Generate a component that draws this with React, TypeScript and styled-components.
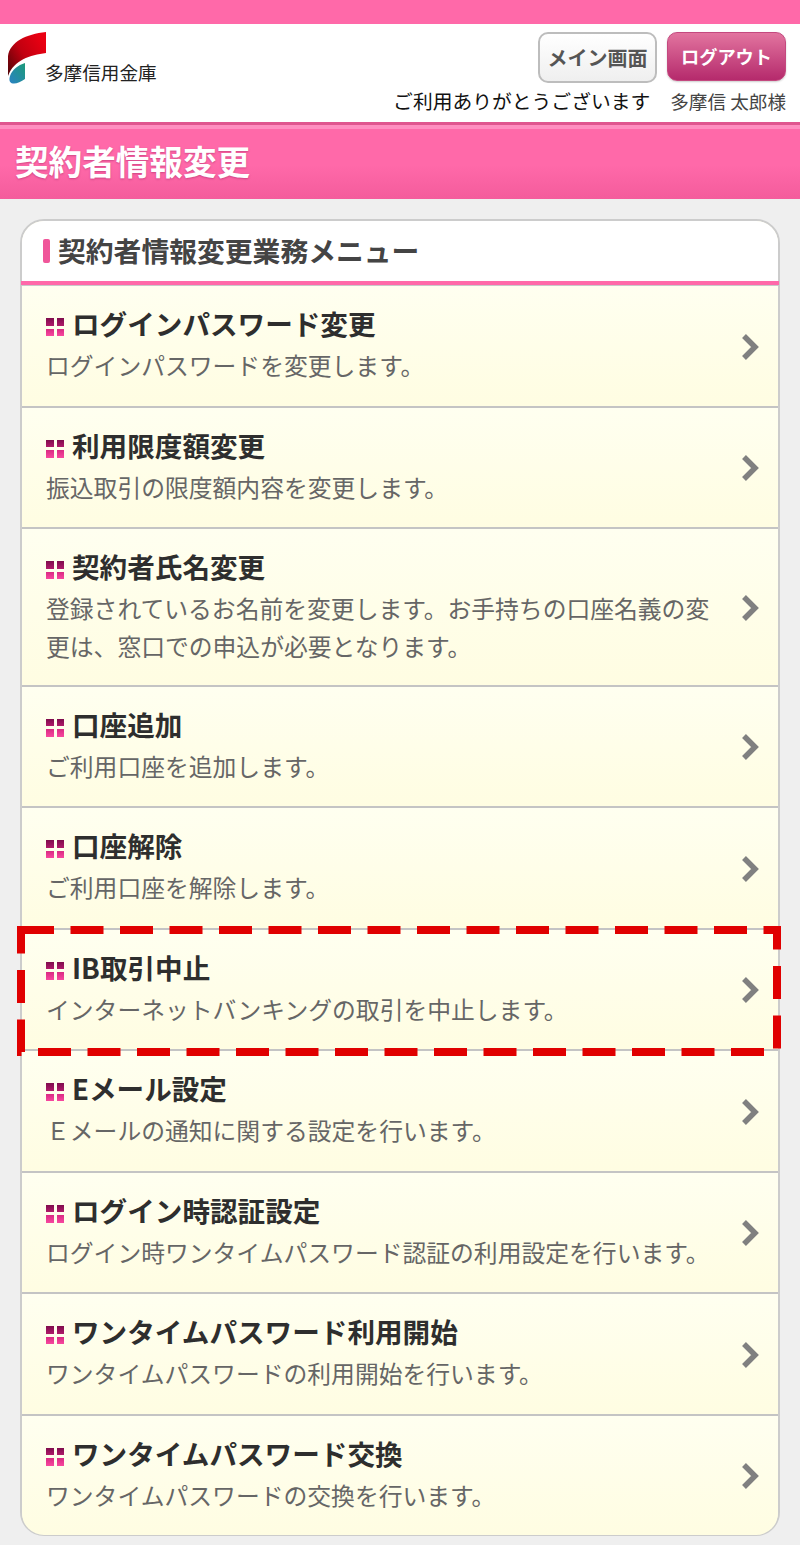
import React from "react";
import styled, { createGlobalStyle } from "styled-components";

const Global = createGlobalStyle`
  html, body { margin: 0; padding: 0; background: #efefef; }
  body { font-family: "Noto Sans CJK JP", "Liberation Sans", sans-serif; }
  * { box-sizing: border-box; }
`;

const Page = styled.div`
  width: 800px;
  height: 1545px;
  overflow: hidden;
  background: #efefef;
`;
const TopBar = styled.div`
  height: 24px;
  background: #ff69a9;
`;
const Header = styled.header`
  height: 98px;
  background: #fff;
  display: flex;
  justify-content: space-between;
  padding: 8px 14px 0 8px;
`;
const Logo = styled.div`
  display: flex;
  align-items: flex-start;
`;
const LogoName = styled.span`
  margin: 27px 0 0 -1px;
  font-size: 18.6px;
  line-height: 26px;
  color: #222;
  white-space: nowrap;
`;
const Account = styled.div`
  display: flex;
  flex-direction: column;
  align-items: flex-end;
`;
const Buttons = styled.div`
  display: flex;
  gap: 10px;
  align-items: flex-start;
`;
const MainButton = styled.button`
  width: 119px;
  height: 51px;
  padding: 0;
  border: 2px solid #bdbdbd;
  border-radius: 10px;
  background: linear-gradient(#ffffff, #efefef);
  color: #555;
  font: 700 20px/1 "Noto Sans CJK JP", sans-serif;
`;
const LogoutButton = styled.button`
  width: 119px;
  height: 49px;
  padding: 0;
  border: 1px solid #c4497f;
  border-radius: 10px;
  background: linear-gradient(#e2749f, #b52a6c);
  box-shadow: 0 1px 2px rgba(0, 0, 0, 0.2);
  color: #fff;
  font: 700 18.2px/1 "Noto Sans CJK JP", sans-serif;
`;
const Greeting = styled.div`
  display: flex;
  gap: 20px;
  margin-top: 4px;
  font-size: 19.8px;
  line-height: 28px;
  white-space: nowrap;
`;
const Thanks = styled.span`
  color: #111;
`;
const UserName = styled.span`
  color: #444;
  font-size: 18.6px;
`;
const TitleBar = styled.div`
  height: 77px;
  border-top: 3px solid #e0558f;
  display: flex;
  align-items: center;
  padding: 0 0 3px 15px;
  background: linear-gradient(#ff8ec0 0, #ff8ec0 4px, #ff69a9 4px, #ff69a9 40px, #f45c9c 100%);
`;
const Title = styled.h1`
  margin: 0;
  color: #fff;
  font-size: 33.6px;
  font-weight: 700;
  line-height: 1;
  text-shadow: 0 1px 2px rgba(150, 30, 90, 0.45);
`;
const Panel = styled.section`
  width: 760px;
  height: 1317px;
  margin: 20px 20px 0;
  border: 2px solid #ccc;
  border-radius: 24px;
  background: #fffde6;
  position: relative;
`;
const PanelHead = styled.div`
  height: 60px;
  display: flex;
  align-items: center;
  gap: 8px;
  padding-left: 21px;
  background: #fff;
  border-radius: 22px 22px 0 0;
`;
const Accent = styled.span`
  width: 7px;
  height: 24px;
  border-radius: 2px;
  background: #f0569a;
`;
const PanelTitle = styled.h2`
  margin: 0;
  font-size: 27.8px;
  line-height: 1;
  font-weight: 700;
  color: #444;
`;
const PinkRule = styled.div`
  height: 5px;
  margin: 0 -1px;
  background: linear-gradient(#ff69a9 0, #ff69a9 4px, #c9c9c9 4px);
`;
const List = styled.ul`
  margin: 0;
  padding: 0;
  list-style: none;
`;
const Row = styled.li<{ $tall?: boolean; $last?: boolean }>`
  position: relative;
  height: ${(p) => (p.$last ? "119.5px" : p.$tall ? "157.5px" : "121.5px")};
  padding: 17px 52px 0 24px;
  border-bottom: ${(p) => (p.$last ? "0" : "2px solid #c4c4c4")};
  border-radius: ${(p) => (p.$last ? "0 0 22px 22px" : "0")};
  background: linear-gradient(#fffff0, #fffde2);
`;
const RowTitle = styled.div`
  display: flex;
  align-items: center;
  gap: 8px;
  height: 43px;
  padding-bottom: 3px;
  font-size: 27.6px;
  line-height: 40px;
  font-weight: 700;
  color: #2e2e2e;
`;
const Dots = styled.span`
  display: grid;
  grid-template-columns: 7.5px 7.5px;
  grid-auto-rows: 7.5px;
  gap: 3px;
  flex: none;
  margin-top: 8px;
`;
const Dot = styled.i<{ $top?: boolean }>`
  display: block;
  background: ${(p) =>
    p.$top
      ? "linear-gradient(#7f0c4d, #b01a6a)"
      : "linear-gradient(#d92a83, #f8489f)"};
`;
const RowDesc = styled.div`
  font-size: 23.8px;
  line-height: 38px;
  color: #666;
`;
const Chevron = styled.svg`
  position: absolute;
  right: 17px;
  top: 50%;
  width: 20px;
  height: 28px;
  margin-top: -13px;
`;
const Highlight = styled.svg`
  position: absolute;
  left: -5px;
  top: -4px;
  width: 764px;
  height: 130px;
  overflow: visible;
  z-index: 2;
  pointer-events: none;
`;

const items = [
  { t: "ログインパスワード変更", d: "ログインパスワードを変更します。" },
  { t: "利用限度額変更", d: "振込取引の限度額内容を変更します。" },
  {
    t: "契約者氏名変更",
    d: "登録されているお名前を変更します。お手持ちの口座名義の変更は、窓口での申込が必要となります。",
    tall: true,
  },
  { t: "口座追加", d: "ご利用口座を追加します。" },
  { t: "口座解除", d: "ご利用口座を解除します。" },
  { t: "IB取引中止", d: "インターネットバンキングの取引を中止します。", mark: true },
  { t: "Eメール設定", d: "Ｅメールの通知に関する設定を行います。" },
  { t: "ログイン時認証設定", d: "ログイン時ワンタイムパスワード認証の利用設定を行います。" },
  { t: "ワンタイムパスワード利用開始", d: "ワンタイムパスワードの利用開始を行います。" },
  { t: "ワンタイムパスワード交換", d: "ワンタイムパスワードの交換を行います。" },
];

export default function App() {
  return (
    <Page>
      <Global />
      <TopBar />
      <Header>
        <Logo>
          <svg width="38" height="52" viewBox="0 0 38 52">
            <defs>
              <linearGradient id="lr" x1="0" y1="1" x2="1" y2="0.3">
                <stop offset="0" stopColor="#4d0508" />
                <stop offset="0.5" stopColor="#c10010" />
                <stop offset="1" stopColor="#ea0012" />
              </linearGradient>
              <linearGradient id="lt" x1="0" y1="1" x2="1" y2="0">
                <stop offset="0" stopColor="#2a82c4" />
                <stop offset="1" stopColor="#1c9a78" />
              </linearGradient>
            </defs>
            <path d="M38 0V21C22 23 6 28 0 44V24C2 10 18 2 38 0Z" fill="url(#lr)" />
            <path d="M17 31V47C13 50 8 52 5 51.5C1 51 1 47 2 44C4 38 10 33 17 31Z" fill="url(#lt)" />
          </svg>
          <LogoName>多摩信用金庫</LogoName>
        </Logo>
        <Account>
          <Buttons>
            <MainButton>メイン画面</MainButton>
            <LogoutButton>ログアウト</LogoutButton>
          </Buttons>
          <Greeting>
            <Thanks>ご利用ありがとうございます</Thanks>
            <UserName>多摩信 太郎様</UserName>
          </Greeting>
        </Account>
      </Header>
      <TitleBar>
        <Title>契約者情報変更</Title>
      </TitleBar>
      <Panel>
        <PanelHead>
          <Accent />
          <PanelTitle>契約者情報変更業務メニュー</PanelTitle>
        </PanelHead>
        <PinkRule />
        <List>
          {items.map((it, i) => (
            <Row key={it.t} $tall={it.tall} $last={i === items.length - 1}>
              <RowTitle>
                <Dots>
                  <Dot $top />
                  <Dot $top />
                  <Dot />
                  <Dot />
                </Dots>
                {it.t}
              </RowTitle>
              <RowDesc>{it.d}</RowDesc>
              <Chevron viewBox="0 0 20 28">
                <path d="M3 3L14 14L3 25" fill="none" stroke="#808080" strokeWidth="5.5" />
              </Chevron>
              {it.mark && (
                <Highlight viewBox="0 0 764 130">
                  <rect
                    x="4"
                    y="4"
                    width="756"
                    height="122"
                    fill="none"
                    stroke="#e00000"
                    strokeWidth="8"
                    strokeDasharray="33 16.5"
                  />
                </Highlight>
              )}
            </Row>
          ))}
        </List>
      </Panel>
    </Page>
  );
}
